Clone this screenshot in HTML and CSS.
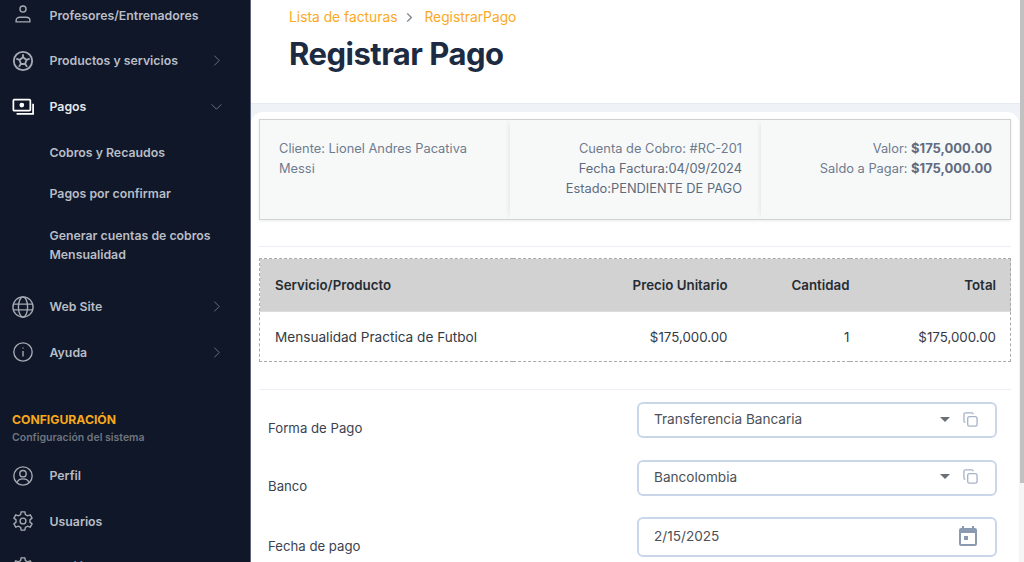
FILE: index.html
```html
<!DOCTYPE html>
<html>
<head>
    <title>Registrar Pago</title>
    <link rel="stylesheet" href="styles.css">
</head>
<body>
    <div class="app">
        <aside class="sidebar">
            <div class="nav-list nav-top">
                <a class="nav-item">
                    <svg class="nav-icon" viewBox="0 0 24 24"><circle cx="12" cy="5.500" r="3.300"/><path d="M4.500 19.500v-1.800c0-2.200 2-3.200 4-3.200h7c2 0 4 1 4 3.200v1.800z"/></svg>
                    <span>Profesores/Entrenadores</span>
                </a>
                <a class="nav-item">
                    <svg class="nav-icon ball" viewBox="0 0 24 24"><circle cx="12" cy="12" r="10"/><path d="M12 8l3.800 2.800-1.500 4.500H9.700l-1.500-4.500z"/><path d="M12 8V4.500M15.800 10.800l3.500-1.300M14.300 15.300l2.200 3M9.700 15.300l-2.200 3M8.200 10.800L4.700 9.500"/></svg>
                    <span>Productos y servicios</span>
                    <svg class="nav-arrow" viewBox="0 0 24 24"><path d="M8 3l9 9-9 9"/></svg>
                </a>
                <a class="nav-item active">
                    <svg class="nav-icon" viewBox="0 0 24 24"><rect x="1.500" y="5" width="18.500" height="12" rx="1"/><circle class="solid" cx="10.700" cy="11" r="2.600"/><path d="M23 9.500v11H5"/></svg>
                    <span>Pagos</span>
                    <svg class="nav-arrow" viewBox="0 0 24 24"><path d="M3 8l9 9 9-9"/></svg>
                </a>
                <div class="sub-list">
                    <a class="sub-item">Cobros y Recaudos</a>
                    <a class="sub-item">Pagos por confirmar</a>
                    <a class="sub-item">Generar cuentas de cobros Mensualidad</a>
                </div>
                <a class="nav-item">
                    <svg class="nav-icon" viewBox="0 0 24 24"><circle cx="12" cy="12" r="11"/><ellipse cx="12" cy="12" rx="5" ry="11"/><path d="M1.500 8.800h21M1.500 15.200h21"/></svg>
                    <span>Web Site</span>
                    <svg class="nav-arrow" viewBox="0 0 24 24"><path d="M8 3l9 9-9 9"/></svg>
                </a>
                <a class="nav-item">
                    <svg class="nav-icon" viewBox="0 0 24 24"><circle cx="12" cy="12" r="10"/><path d="M12 11v6M12 7v1.200"/></svg>
                    <span>Ayuda</span>
                    <svg class="nav-arrow" viewBox="0 0 24 24"><path d="M8 3l9 9-9 9"/></svg>
                </a>
            </div>
            <div class="nav-section">
                <div class="section-title">CONFIGURACIÓN</div>
                <div class="section-sub">Configuración del sistema</div>
            </div>
            <div class="nav-list">
                <a class="nav-item">
                    <svg class="nav-icon" viewBox="0 0 24 24"><circle cx="12" cy="12" r="10"/><circle cx="12" cy="9.500" r="3.500"/><path d="M5.500 19c1-2.800 3.500-3.800 6.500-3.800s5.500 1 6.500 3.800"/></svg>
                    <span>Perfil</span>
                </a>
                <a class="nav-item">
                    <svg class="nav-icon" viewBox="0 0 24 24"><circle cx="12" cy="12" r="3.200"/><path d="M10 2h4l.6 3 2.400 1.300 2.900-1 2 3.500-2.300 2v2.400l2.300 2-2 3.500-2.900-1-2.400 1.300-.6 3h-4l-.6-3-2.400-1.300-2.900 1-2-3.500 2.300-2v-2.400l-2.300-2 2-3.500 2.900 1 2.400-1.300z"/></svg>
                    <span>Usuarios</span>
                </a>
                <a class="nav-item">
                    <svg class="nav-icon" viewBox="0 0 24 24"><circle cx="12" cy="12" r="3.200"/><path d="M10 2h4l.6 3 2.400 1.300 2.900-1 2 3.500-2.300 2v2.400l2.300 2-2 3.500-2.900-1-2.400 1.300-.6 3h-4l-.6-3-2.400-1.300-2.900 1-2-3.500 2.300-2v-2.400l-2.300-2 2-3.500 2.900 1 2.400-1.300z"/></svg>
                    <span>Habilidades y Reportes</span>
                </a>
            </div>
        </aside>

        <main class="main">
            <header class="page-head">
                <div class="crumbs">
                    <span>Lista de facturas</span>
                    <svg class="crumb-sep" viewBox="0 0 24 24"><path d="M7 3l9 9-9 9"/></svg>
                    <span>RegistrarPago</span>
                </div>
                <h1>Registrar Pago</h1>
            </header>

            <div class="page-body">
                <section class="card">
                    <div class="summary">
                        <div class="summary-col">
                            <div>Cliente: Lionel Andres Pacativa Messi</div>
                        </div>
                        <div class="summary-col right">
                            <div>Cuenta de Cobro: #RC-201</div>
                            <div class="dark">Fecha Factura:04/09/2024</div>
                            <div class="dark">Estado:PENDIENTE DE PAGO</div>
                        </div>
                        <div class="summary-col right last">
                            <div>Valor: <b>$175,000.00</b></div>
                            <div>Saldo a Pagar: <b>$175,000.00</b></div>
                        </div>
                    </div>

                    <hr class="divider">

                    <table class="items">
                        <thead>
                            <tr>
                                <th class="col-name">Servicio/Producto</th>
                                <th class="col-price">Precio Unitario</th>
                                <th class="col-qty">Cantidad</th>
                                <th class="col-total">Total</th>
                            </tr>
                        </thead>
                        <tbody>
                            <tr>
                                <td class="col-name">Mensualidad Practica de Futbol</td>
                                <td class="col-price">$175,000.00</td>
                                <td class="col-qty">1</td>
                                <td class="col-total">$175,000.00</td>
                            </tr>
                        </tbody>
                    </table>

                    <hr class="divider second">

                    <form class="pay-form">
                        <div class="form-row">
                            <label>Forma de Pago</label>
                            <div class="field">
                                <span class="field-value">Transferencia Bancaria</span>
                                <span class="caret"></span>
                                <svg class="copy" viewBox="0 0 16 16"><rect x="5" y="5" width="10" height="10" rx="2"/><path d="M11 2.500A1.500 1.500 0 0 0 9.500 1h-7A1.500 1.500 0 0 0 1 2.500v7A1.500 1.500 0 0 0 2.500 11"/></svg>
                            </div>
                        </div>
                        <div class="form-row">
                            <label>Banco</label>
                            <div class="field">
                                <span class="field-value">Bancolombia</span>
                                <span class="caret"></span>
                                <svg class="copy" viewBox="0 0 16 16"><rect x="5" y="5" width="10" height="10" rx="2"/><path d="M11 2.500A1.500 1.500 0 0 0 9.500 1h-7A1.500 1.500 0 0 0 1 2.500v7A1.500 1.500 0 0 0 2.500 11"/></svg>
                            </div>
                        </div>
                        <div class="form-row date-row">
                            <label>Fecha de pago</label>
                            <div class="field date">
                                <span class="field-value">2/15/2025</span>
                                <svg class="calendar" viewBox="3 2 18 20"><path fill-rule="evenodd" d="M5 4h1V2h2v2h8V2h2v2h1a2 2 0 0 1 2 2v14a2 2 0 0 1-2 2H5a2 2 0 0 1-2-2V6a2 2 0 0 1 2-2zm0 5v11h14V9zm3 3h4v4H8z"/></svg>
                            </div>
                        </div>
                    </form>
                </section>
            </div>
        </main>
        <div class="scrollbar"><div class="scroll-thumb"></div></div>
    </div>
</body>
</html>
```
FILE: styles.css
```css
* {
    box-sizing: border-box;
}
html, body {
    margin: 0;
    height: 100%;
    overflow: hidden;
}
body {
    font-family: "Inter", "Noto Sans", sans-serif;
    color: #212b36;
    background: #fff;
}
.app {
    display: flex;
    height: 562px;
    overflow: hidden;
}

/* sidebar */
.sidebar {
    width: 251px;
    flex-shrink: 0;
    height: 562px;
    overflow: hidden;
    background: #0f1728;
    border-right: 1px solid #5b6478;
    color: #b9bdc5;
    font-size: 12.3px;
    font-weight: 600;
}
.nav-top {
    margin-top: -7.6px;
}
.nav-item {
    display: flex;
    align-items: center;
    height: 45.6px;
    padding: 0 27px 0 12px;
}
.nav-item span {
    flex: 1;
}
.nav-icon {
    width: 22px;
    height: 22px;
    margin-right: 15.5px;
    fill: none;
    stroke: #a6abb3;
    stroke-width: 1.5;
    flex-shrink: 0;
    overflow: visible;
}
.nav-icon.ball {
    stroke-width: 2;
}
.nav-icon .solid {
    fill: #fff;
    stroke: none;
}
.nav-arrow {
    width: 13px;
    height: 13px;
    fill: none;
    stroke: #7e8590;
    stroke-width: 1.5;
}
.nav-item.active {
    color: #e6e8ec;
}
.nav-item.active .nav-icon {
    stroke: #fff;
    stroke-width: 1.9;
}
.sub-list {
    padding: 2.5px 30px 9px 49.5px;
}
.sub-item {
    display: block;
    padding: 11px 0;
    line-height: 19px;
}
.sub-item + .sub-item {
    margin-top: 0.7px;
}
.nav-section {
    margin-top: 36.6px;
    padding: 0 12px 6px;
}
.section-title {
    color: #f5a81c;
    font-size: 12.2px;
    font-weight: 700;
    line-height: 16px;
}
.section-sub {
    color: #70757f;
    font-size: 10.5px;
    line-height: 19px;
}

/* main */
.main {
    flex: 1;
    min-width: 0;
}
.page-head {
    height: 104px;
    padding: 8px 38px 0;
    background: #fff;
    border-bottom: 1px solid #e6ebf2;
}
.crumbs {
    display: flex;
    align-items: center;
    font-size: 13.8px;
    line-height: 18px;
    color: #fba91d;
}
.crumb-sep {
    width: 11px;
    height: 11px;
    margin: 0 9px 0 7px;
    fill: none;
    stroke: #7c8590;
    stroke-width: 3;
}
h1 {
    margin: 10px 0 0;
    font-size: 31px;
    line-height: 36px;
    font-weight: 700;
    letter-spacing: -0.5px;
    color: #1c2b41;
}
.page-body {
    padding: 8px 1px 0 0;
    background: #eff3f8;
}
.card {
    height: 460px;
    padding: 7px 8px 0;
    background: #fff;
    border-radius: 12px 12px 0 0;
}
.summary {
    display: grid;
    grid-template-columns: 250px 251px 1fr;
    height: 101px;
    border: 1px solid #cfd1d2;
    background: #f7f9f9;
    box-shadow: 0 1px 3px rgba(0, 0, 0, 0.08);
    font-size: 12.85px;
    line-height: 20px;
    color: #6f7b8f;
}
.summary-col {
    padding: 19px 19px 0;
}
.summary-col.right {
    text-align: right;
    box-shadow: -4px 0 5px -3px rgba(0, 0, 0, 0.08);
}
.summary-col.last {
    padding-right: 18px;
}
.summary-col .dark {
    color: #5f6a7d;
}
.summary-col b {
    font-weight: 700;
    font-size: 13px;
    line-height: 1;
    color: #5f6b80;
}
.divider {
    margin: 26px 0 11px;
    border: 0;
    border-top: 1px solid #eceff5;
}
.divider.second {
    margin: 27px 0 0;
}

/* table */
.items {
    width: 100%;
    border-collapse: collapse;
    border: 1px dashed #a9a9a9;
    font-size: 13.3px;
}
.items th {
    height: 53px;
    background: #d2d2d2;
    font-weight: 600;
    color: #262c33;
    border-bottom: 1px solid #dcdcdc;
}
.items td {
    height: 50px;
    color: #333a45;
}
.items th, .items td {
    padding: 0 15px;
    text-align: right;
}
.items .col-name {
    text-align: left;
}
.items td.col-name {
    font-size: 13.6px;
}
.items .col-price {
    width: 215px;
    padding-right: 0;
}
.items .col-qty {
    width: 122px;
    padding-right: 0;
}
.items .col-total {
    width: 161px;
    padding-right: 14px;
}

/* form */
.pay-form {
    padding: 12px 0 0 9px;
}
.form-row {
    display: flex;
    align-items: flex-end;
    margin-bottom: 21.5px;
}
.form-row label {
    width: 369px;
    flex-shrink: 0;
    padding-bottom: 1px;
    font-size: 13.2px;
    line-height: 18px;
    color: #3a4250;
}
.date-row label {
    padding-bottom: 2px;
}
.field {
    display: flex;
    align-items: center;
    width: 360px;
    height: 36px;
    padding: 0 17px 2px 15px;
    border: 2px solid #cad7e8;
    border-radius: 6px;
    font-size: 13.6px;
    color: #4c4f55;
    background: #fff;
}
.field.date {
    height: 40px;
    padding: 0 18px 3px 15px;
}
.field-value {
    flex: 1;
}
.caret {
    width: 0;
    height: 0;
    margin-right: 13px;
    border-left: 5px solid transparent;
    border-right: 5px solid transparent;
    border-top: 5px solid #6b6f76;
}
.copy {
    width: 15px;
    height: 15px;
    fill: none;
    stroke: #a6b3c8;
    stroke-width: 1.4;
}
.calendar {
    width: 18px;
    height: 20px;
    fill: #8b9ab3;
}

/* scrollbar on the right edge */
.scrollbar {
    width: 4px;
    flex-shrink: 0;
    background: #f5f5f5;
}
.scroll-thumb {
    height: 483px;
    background: #c1c1c1;
}
```
